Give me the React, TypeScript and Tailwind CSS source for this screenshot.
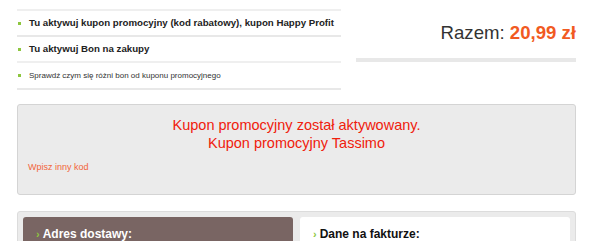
import React from "react";

const Bullet = () => <span className="block w-[3px] h-[3px] bg-[#8dc63f] mr-[8px] shrink-0" />;

export default function App() {
  return (
    <div className="w-[600px] h-[241px] overflow-hidden bg-white font-['Liberation_Sans',Arial,sans-serif] text-[#333]">
      <div className="flex pl-[17px] pt-[9px]">
        <div className="w-[324px] border-t-2 border-[#efefef]">
          <div className="h-[26px] border-b-2 border-[#e8e8e8] flex items-center pl-[1px]">
            <Bullet />
            <span className="font-bold text-[9.7px] text-[#222]">Tu aktywuj kupon promocyjny (kod rabatowy), kupon Happy Profit</span>
          </div>
          <div className="h-[26px] border-b-2 border-[#efefef] flex items-center pl-[1px]">
            <Bullet />
            <span className="font-bold text-[9.7px] text-[#222]">Tu aktywuj Bon na zakupy</span>
          </div>
          <div className="h-[27px] border-b-2 border-[#e8e8e8] flex items-center pl-[1px]">
            <Bullet />
            <span className="text-[8px] text-[#333]">Sprawdź czym się różni bon od kuponu promocyjnego</span>
          </div>
        </div>
        <div className="ml-[15px] w-[220px] flex flex-col">
          <div className="mt-[13px] h-[21px] text-right text-[18.6px] leading-[21px] whitespace-nowrap">
            <span className="text-[#333]">Razem: </span>
            <span className="font-bold text-[#f15a22]">20,99 zł</span>
          </div>
          <div className="mt-[15px] h-[4px] bg-[#e8e8e8]" />
        </div>
      </div>

      <div className="ml-[17px] w-[559px] mt-[14px] h-[91px] border border-[#d4d4d4] rounded-[3px] bg-[#ebebeb] pt-[11px] px-[10px]">
        <div className="text-center text-[14.5px] leading-[18px] text-[#f0200c]">
          <div>Kupon promocyjny został aktywowany.</div>
          <div>Kupon promocyjny Tassimo</div>
        </div>
        <div className="mt-[10px] text-[9px] leading-[11px] text-[#f2653a]">Wpisz inny kod</div>
      </div>

      <div className="ml-[17px] w-[559px] mt-[16px] h-[60px] border border-[#dcdcdc] rounded-[3px] bg-[#ebebeb] pt-[5px] px-[5px] flex gap-[7px]">
        <div className="w-[270px] h-[50px] bg-[#796563] rounded-[3px] pl-[13px] pt-[10px] flex items-start">
          <span className="text-[#8dc63f] text-[11px] font-bold leading-[14px] mr-[3px]">›</span>
          <span className="text-white font-bold text-[12px] leading-[14px]">Adres dostawy:</span>
        </div>
        <div className="w-[270px] h-[50px] bg-white rounded-[3px] pl-[13px] pt-[10px] flex items-start">
          <span className="text-[#8dc63f] text-[11px] font-bold leading-[14px] mr-[3px]">›</span>
          <span className="text-[#111] font-bold text-[12px] leading-[14px]">Dane na fakturze:</span>
        </div>
      </div>
    </div>
  );
}
